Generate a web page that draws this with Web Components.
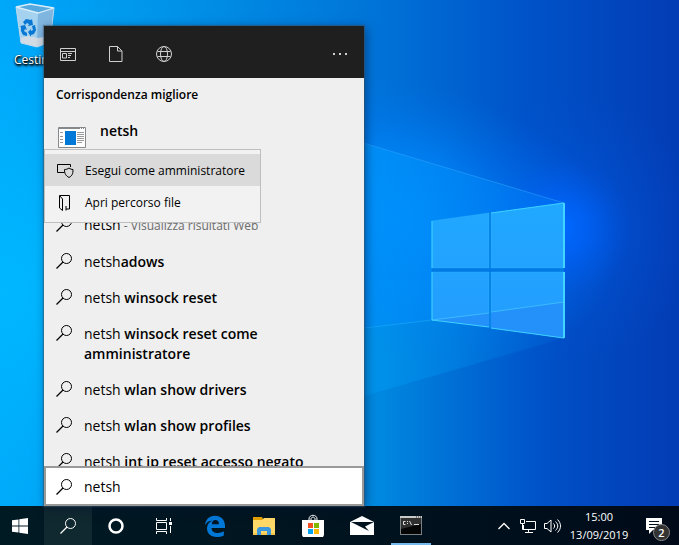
<!DOCTYPE html>
<html lang="it">
<head>
<meta charset="utf-8">
<meta name="viewport" content="width=device-width, initial-scale=1">
<title>netsh</title>
<style>
  html, body {
    height: 100%;
    margin: 0;
  }

  body {
    overflow: hidden;
    font-family: "Open Sans", "Noto Sans", sans-serif;
    font-size: 14px;
    line-height: 20px;
    color: #000;
  }
</style>
</head>
<body>
<win-desktop>
  <desk-wallpaper slot="wallpaper"></desk-wallpaper>
  <desk-shortcut slot="shortcut">Cestino</desk-shortcut>
  <search-panel slot="panel">
    <panel-header slot="header"></panel-header>
    <best-match slot="best" heading="Corrispondenza migliore">netsh</best-match>
    <result-item>netsh<small slot="note"> - Visualizza risultati Web</small></result-item>
    <result-item>netsh<b>adows</b></result-item>
    <result-item>netsh <b>winsock reset</b></result-item>
    <result-item>netsh <b>winsock reset come</b> <b>amministratore</b></result-item>
    <result-item>netsh <b>wlan show drivers</b></result-item>
    <result-item>netsh <b>wlan show profiles</b></result-item>
    <result-item>netsh <b>int ip reset accesso negato</b></result-item>
    <context-menu slot="menu">
      <context-item icon="shield" active>Esegui come amministratore</context-item>
      <context-item icon="location">Apri percorso file</context-item>
    </context-menu>
    <search-box slot="search" value="netsh"></search-box>
  </search-panel>
  <task-bar slot="taskbar">
    <task-button icon="start" label="Start"></task-button>
    <task-button icon="search" label="Cerca" pressed></task-button>
    <task-button icon="cortana" label="Cortana"></task-button>
    <task-button icon="taskview" label="Visualizzazione attività"></task-button>
    <task-button slot="pinned" icon="edge" label="Microsoft Edge"></task-button>
    <task-button slot="pinned" icon="explorer" label="Esplora file"></task-button>
    <task-button slot="pinned" icon="store" label="Microsoft Store"></task-button>
    <task-button slot="pinned" icon="mail" label="Posta"></task-button>
    <task-button slot="pinned" icon="console" label="Prompt dei comandi" running></task-button>
    <system-tray slot="tray" time="15:00" date="13/09/2019" count="2"></system-tray>
  </task-bar>
</win-desktop>

<script>
const svg = (w, h, body) =>
	`<svg width="${w}" height="${h}" viewBox="0 0 ${w} ${h}" fill="none" stroke="currentColor" aria-hidden="true">${body}</svg>`;

const icons = {
	search: svg(16, 16, `<circle cx="10.500" cy="5.500" r="5"/><path d="M7 9 .500 15.500" stroke-width="1.200"/>`),
	apps: svg(16, 14, `<path d="M.5 1.500h15v12H.5zM.5 4.500h15M2.500 6.500h4v4.500h-4zM8 6.500h4M8 8.500h3M8 10.500h2"/>`),
	file: svg(14, 16, `<path d="M.5.5h8l4.500 4.500v10.500H.5zM8.500.5V5H13"/>`),
	web: svg(16, 16, `<circle cx="8" cy="8" r="7.500"/><ellipse cx="8" cy="8" rx="3.500" ry="7.500"/><path d="M1.500 5.500h13M1.500 10.500h13"/>`),
	more: svg(16, 4, `<path d="M1 1h2v2H1zM7 1h2v2H7zM13 1h2v2h-2z" fill="currentColor" stroke="none"/>`),
	app: svg(28, 21, `
		<path d="M.5.500h27v20H.5z" fill="#fff" stroke="#85898c"/>
		<path d="M1 1h26v1H1z" fill="#85898c" stroke="none"/>
		<path d="M22 1.500h1m1 0h1m1 0h1" stroke="#fff"/>
		<path d="M7 4h11v14H7z" fill="#0078d7" stroke="none"/>
		<path d="M2 5.500h3M2 9.500h3M2 12.500h3M2 15.500h3M19 5.500h7M19 7.500h7M19 9.500h7M19 11.500h7M19 13.500h7M19 15.500h5" stroke="#999"/>`),
	shield: svg(17, 16, `<path d="M7.500 9.500H.5v-8h13v2.500"/><path d="M12 5c1.500 1 2.500 1.500 4 1.500 0 4-.5 6-4 8-3.500-2-4.500-4-4.500-8 2 0 3-.5 4.500-1.500z"/>`),
	location: svg(17, 16, `<path d="M3 .5h9.500v13.500H9M2.500.5v12.500l3 2.500V4zM9 11v4.500"/>`),
	start: svg(16, 16, `<path d="M0 2.300 6.500 1.400v6.200H0zM7.300 1.300 16 0v7.600H7.300zM0 8.400h6.500v6.200L0 13.700zM7.300 8.400H16V16l-8.700-1.300z" fill="currentColor" stroke="none"/>`),
	cortana: svg(16, 16, `<circle cx="8" cy="8" r="6.500" stroke-width="2.500"/>`),
	taskview: svg(16, 16, `<path d="M.5 0v2.500h10V0M.5 4.500h10v7H.5zM.5 16v-2.500h10V16M14.500 0v3M14.500 8v7"/><path d="M13 4h3v3h-3z" fill="currentColor" stroke="none"/>`),
	edge: svg(20, 22, `<path d="M0 10C.7 4.500 4.200.7 10 .7c6 0 10 4.200 10 10.100v2.100H6.500c0 3 2.500 5.100 6.200 5.100 2.300 0 4.300-.6 6.100-1.700v4.200c-2.200 1.100-4.400 1.500-7.200 1.500C5.700 22 2 18.300 2 13.500 2 10 3.800 7 7.300 5.500 4 5.700 1.700 7.300 0 10zm6.700-.8H14c-.1-2.700-1.300-4.200-3.700-4.200-1.900 0-3.200 1.500-3.600 4.200z" fill="#0078d7" stroke="none"/>`),
	explorer: svg(22, 18, `
		<g stroke="none"><path d="M0 0h9l1 2h11v3H0z" fill="#e2a000"/>
		<path d="M0 3h9l2-2h11v17H0z" fill="#ffd868"/>
		<path d="M0 16h22v2H0z" fill="#f7c64d"/>
		<path d="M4 18v-6l2-2h10l2 2v6h-4v-4H8v4z" fill="#3a96dd"/></g>`),
	store: svg(24, 24, `
		<path d="M8 7V5c0-5 8-5 8 0v2M10 7V5c0-2.500 4-2.500 4 0v2"/>
		<path d="M1 6h22v15l-1 2H2l-1-2z" fill="#fff" stroke="none"/>
		<g stroke="none"><path d="M7 9h5v5H7z" fill="#f25022"/><path d="M13 9h5v5h-5z" fill="#7fba00"/><path d="M7 15h5v5H7z" fill="#00a4ef"/><path d="M13 15h5v5h-5z" fill="#ffb900"/></g>`),
	mail: svg(24, 20, `<path d="M0 6 12 0l12 6v13H0z" fill="#fff" stroke="none"/><path d="M1 6h23l-9 4.500L19 15z" fill="#00131f" stroke="none"/>`),
	console: svg(22, 19, `
		<g stroke="none"><path d="M0 0h22v19H0z" fill="#7c8284"/><path d="M0 0h22v2H0z" fill="#c8c8c8"/><path d="M1 2h20v16H1z" fill="#050505"/><path d="M1 2h20v6L1 13z" fill="#303030"/></g>
		<path d="M16 1h1m1 0h1m1 0h1" stroke="#333"/>
		<path d="M5.500 5.500H3.500v3h2M7.500 5v1m0 1v1M9.500 5l2 4M14 8.500h5" stroke="#ddd"/>`),
	chevron: svg(14, 8, `<path d="m1.500 7 5.500-5.500L12.500 7" stroke-width="1.300"/>`),
	network: svg(16, 14, `<path d="M6 2.500h9.500v8h-12V6M8.500 11v2M5 13.500h8M.5.500h4v4H.5zM2.500 5v5.500h2"/>`),
	volume: svg(17, 14, `<path d="M.5 4.500H3l4-3.500v12l-4-3.500H.5zM9.500 4.500c1.500 1.500 1.500 3.500 0 5M11.500 2.500c3 3 3 6 0 9M13.500.5c4 4 4 9 0 13"/>`),
	notice: svg(18, 18, `<path d="M1 1h16v12H8l-4 4v-4H1z" fill="#fff" stroke="none"/><path d="M4 4.500h10M4 7.500h10M4 10.500h6" stroke="#00101d"/>`),
};

class WinDesktop extends HTMLElement {
	constructor() {
		super();
		this.attachShadow({ mode: "open" });
		this.shadowRoot.innerHTML = `
      <style>
        :host {
          display: flex;
          flex-direction: column;
          height: 100vh;
        }

        main {
          position: relative;
          flex: 1;
          min-height: 0;
        }
      </style>
      <main>
        <slot name="wallpaper"></slot>
        <slot name="shortcut"></slot>
        <slot name="panel"></slot>
      </main>
      <slot name="taskbar"></slot>
    `;
	}
}

class DeskWallpaper extends HTMLElement {
	constructor() {
		super();
		this.attachShadow({ mode: "open" });
		this.shadowRoot.innerHTML = `
      <style>
        :host {
          position: absolute;
          inset: 0;
        }

        svg {
          display: block;
          width: 100%;
          height: 100%;
        }
      </style>
      <svg viewBox="0 0 679 506" preserveAspectRatio="xMaxYMid slice" aria-hidden="true">
        <defs>
          <linearGradient id="sky" x2="1" y2="0">
            <stop offset="0" stop-color="#00a6f8"/>
            <stop offset=".3" stop-color="#008ee6"/>
            <stop offset=".55" stop-color="#0074d8"/>
            <stop offset=".78" stop-color="#0052c8"/>
            <stop offset="1" stop-color="#033cb4"/>
          </linearGradient>
          <radialGradient id="left" gradientUnits="userSpaceOnUse" cx="0" cy="290" r="340">
            <stop offset="0" stop-color="#00b8ff"/>
            <stop offset="1" stop-color="#00b0ff" stop-opacity="0"/>
          </radialGradient>
          <radialGradient id="halo" gradientUnits="userSpaceOnUse" cx="0" cy="0" r="1" gradientTransform="translate(400 220) rotate(14) scale(220 140)">
            <stop offset="0" stop-color="#008cff"/>
            <stop offset=".5" stop-color="#0084f8" stop-opacity=".7"/>
            <stop offset="1" stop-color="#0070e8" stop-opacity="0"/>
          </radialGradient>
          <radialGradient id="glow" gradientUnits="userSpaceOnUse" cx="562" cy="228" r="140">
            <stop offset="0" stop-color="#0068ff"/>
            <stop offset=".2" stop-color="#0062fa" stop-opacity=".75"/>
            <stop offset=".5" stop-color="#005ae8" stop-opacity=".25"/>
            <stop offset="1" stop-color="#0054d8" stop-opacity="0"/>
          </radialGradient>
          <linearGradient id="beam" gradientUnits="userSpaceOnUse" x1="340" y1="0" x2="564" y2="0">
            <stop offset="0" stop-color="#0096fa" stop-opacity=".8"/>
            <stop offset=".5" stop-color="#008cf8" stop-opacity=".6"/>
            <stop offset="1" stop-color="#007cf8" stop-opacity=".4"/>
          </linearGradient>
          <linearGradient id="low" gradientUnits="userSpaceOnUse" x1="340" y1="0" x2="564" y2="0">
            <stop offset="0" stop-color="#009cf2" stop-opacity=".8"/>
            <stop offset=".5" stop-color="#0086e6" stop-opacity=".6"/>
            <stop offset="1" stop-color="#0062d4" stop-opacity=".3"/>
          </linearGradient>
          <linearGradient id="floor" gradientUnits="userSpaceOnUse" x1="340" y1="0" x2="560" y2="0">
            <stop offset="0" stop-color="#0098e6" stop-opacity=".9"/>
            <stop offset="1" stop-color="#0068d4" stop-opacity="0"/>
          </linearGradient>
          <linearGradient id="pane" x2="0" y2="1">
            <stop offset="0" stop-color="#20a8ff"/>
            <stop offset="1" stop-color="#249cff"/>
          </linearGradient>
        </defs>
        <path d="M0 0h679v506H0z" fill="url(#sky)"/>
        <path d="M0 0h340v506H0z" fill="url(#left)"/>
        <path d="M340 280h224v226H340z" fill="url(#floor)"/>
        <path d="M150 50h500v340H150z" fill="url(#halo)"/>
        <path d="M400 60h279v350H400z" fill="url(#glow)"/>
        <path d="M340 136 564 203v98L432 320l-92 12z" fill="url(#beam)"/>
        <path d="m340 332 92-12 132-19v37L364 396l-24 7z" fill="url(#low)"/>
        <path d="M340 136 564 203" stroke="#32a8ff" stroke-opacity=".5"/>
        <path d="m340 331 92-11" stroke="#2cbcff" stroke-opacity=".4"/>
        <path d="m432 221 132-18v135l-132-18z" fill="#0078e6"/>
        <path d="m432 221 57-8v55h-57zM491 213l73-10v65h-73zM432 272h57v55l-57-7zM491 272h73v66l-73-10z" fill="url(#pane)" stroke="#38c8ff" stroke-opacity=".3"/>
        <path d="m432 320 57-7v14zM491 312l73-10v36l-73-10z" fill="#2490fa"/>
        <path d="m432 320 57-7m2-1 73-10" stroke="#3cbcff"/>
        <path d="M432 221v47m0 4v48l57 7m2 1 73 10M491 213l73-10" stroke="#3cd0ff" fill="none"/>
        <path d="M564 203v65m0 4v66" stroke="#40d4ff" stroke-width="2"/>
      </svg>
    `;
	}
}

class DeskShortcut extends HTMLElement {
	constructor() {
		super();
		this.attachShadow({ mode: "open" });
		this.shadowRoot.innerHTML = `
      <style>
        :host {
          position: absolute;
          top: 3px;
          left: 0;
          width: 70px;
        }

        a {
          display: flex;
          flex-direction: column;
          align-items: center;
          gap: 3px;
          color: #fff;
          font-size: 12px;
          line-height: 16px;
          text-decoration: none;
          text-shadow: 0 1px 2px #000, 1px 1px 2px #000, 1px 2px 3px #000;
        }
      </style>
      <a href="#">
        <svg width="40" height="46" viewBox="0 0 40 46" aria-hidden="true">
          <path d="m1 4 14-3 24 4-4 34-13 5L6 40z" fill="#9fcdf0" fill-opacity=".75"/>
          <path d="m1 4 22 6-1 34L6 40z" fill="#b9d8ee" fill-opacity=".7"/>
          <path d="m23 10 16-5-4 34-13 5z" fill="#82b4dc" fill-opacity=".8"/>
          <path d="m5 35 9-2 9 2 12-2v6l-13 5-16-4z" fill="#d8dde2" fill-opacity=".9"/>
          <path d="m1 4 14-3 24 4-16 5z" fill="#55a9df" stroke="#d8edf9" stroke-width="1.300"/>
          <path d="m1 4 5 36 16 4 13-5 4-34" fill="none" stroke="#b9d8ee"/>
          <g fill="#0878d4">
            <path d="m8 19 3-3 5 1 1-1 1 6-5 1 1-2-2-1-2 2z"/>
            <path d="m17 23 3-1 1 5-2 4-3 1v2l-3-5 3-3v2l2-1z"/>
            <path d="m5 23 5-1 2 5-2-1-1 2 3 2v3l-4-1-2-4v-4z"/>
          </g>
        </svg>
        <slot></slot>
      </a>
    `;
	}
}

class SearchPanel extends HTMLElement {
	constructor() {
		super();
		this.attachShadow({ mode: "open" });
		this.shadowRoot.innerHTML = `
      <style>
        :host {
          position: absolute;
          top: 26px;
          bottom: 0;
          left: 44px;
          display: flex;
          flex-direction: column;
          width: 320px;
          max-width: calc(100vw - 44px);
          background: #efefef;
          box-shadow: 0 0 1px 1px rgba(60, 80, 95, 0.5), 2px 2px 10px rgba(0, 20, 60, 0.5);
        }

        .body {
          flex: 1;
          min-height: 0;
          overflow: hidden;
        }

        .results {
          padding-top: 52px;
        }
      </style>
      <slot name="header"></slot>
      <div class="body">
        <slot name="best"></slot>
        <div class="results"><slot></slot></div>
      </div>
      <slot name="search"></slot>
      <slot name="menu"></slot>
    `;
	}
}

class PanelHeader extends HTMLElement {
	constructor() {
		super();
		this.attachShadow({ mode: "open" });
		this.shadowRoot.innerHTML = `
      <style>
        :host {
          display: flex;
          flex: none;
          align-items: center;
          height: 52px;
          background: #1f1f1f;
          color: #d0d0d0;
        }

        button {
          display: flex;
          align-items: center;
          justify-content: center;
          width: 48px;
          height: 48px;
          margin-top: 4px;
          padding: 0;
          border: 0;
          background: none;
          color: inherit;
        }

        .more {
          margin-left: auto;
        }
      </style>
      <button aria-label="App">${icons.apps}</button>
      <button aria-label="Documenti">${icons.file}</button>
      <button aria-label="Web">${icons.web}</button>
      <button class="more" aria-label="Altro">${icons.more}</button>
    `;
	}
}

class BestMatch extends HTMLElement {
	constructor() {
		super();
		this.attachShadow({ mode: "open" });
		this.shadowRoot.innerHTML = `
      <style>
        :host {
          display: block;
        }

        h2 {
          margin: 0;
          padding: 7px 12px 5px;
          font-size: 12px;
          font-weight: 600;
          line-height: 20px;
        }

        button {
          display: flex;
          gap: 14px;
          width: 100%;
          height: 45px;
          padding: 11px 14px 0;
          border: 0;
          background: none;
          color: inherit;
          font: inherit;
          font-weight: 600;
        }

        svg {
          margin-top: 6px;
        }
      </style>
      <h2></h2>
      <button>${icons.app}<span><slot></slot></span></button>
    `;
		this.shadowRoot.querySelector("h2").textContent = this.getAttribute("heading");
	}
}

class ResultItem extends HTMLElement {
	constructor() {
		super();
		this.attachShadow({ mode: "open" });
		this.shadowRoot.innerHTML = `
      <style>
        :host {
          display: block;
        }

        button {
          display: flex;
          gap: 12px;
          width: 100%;
          padding: 8px 40px 8px 12px;
          border: 0;
          background: none;
          color: inherit;
          font: inherit;
          text-align: left;
        }

        svg {
          flex: none;
          margin-top: 1px;
        }

        ::slotted(b) {
          font-weight: 600;
        }

        ::slotted(small) {
          color: #6b6b6b;
          font-size: 12px;
        }
      </style>
      <button>${icons.search}<span><slot></slot><slot name="note"></slot></span></button>
    `;
	}
}

class ContextMenu extends HTMLElement {
	constructor() {
		super();
		this.attachShadow({ mode: "open" });
		this.shadowRoot.innerHTML = `
      <style>
        :host {
          position: absolute;
          top: 123px;
          left: 0;
          box-sizing: border-box;
          width: 217px;
          padding: 4px 0;
          border: 1px solid #bfbfbf;
          background: #f2f2f2;
        }
      </style>
      <div role="menu"><slot></slot></div>
    `;
	}
}

class ContextItem extends HTMLElement {
	constructor() {
		super();
		this.attachShadow({ mode: "open" });
		this.shadowRoot.innerHTML = `
      <style>
        :host {
          display: block;
        }

        :host([active]) {
          background: #dadada;
        }

        button {
          display: flex;
          align-items: center;
          gap: 11px;
          width: 100%;
          height: 32px;
          padding: 2px 12px 0;
          border: 0;
          background: none;
          color: inherit;
          font: inherit;
          font-size: 12px;
          white-space: nowrap;
        }
      </style>
      <button role="menuitem">${icons[this.getAttribute("icon")]}<span><slot></slot></span></button>
    `;
	}
}

class SearchBox extends HTMLElement {
	constructor() {
		super();
		this.attachShadow({ mode: "open" });
		this.shadowRoot.innerHTML = `
      <style>
        :host {
          display: flex;
          flex: none;
          align-items: center;
          gap: 12px;
          box-sizing: border-box;
          height: 40px;
          padding: 2px 10px 0;
          border: 2px solid #999;
          background: #fff;
        }

        label {
          display: flex;
        }

        input {
          flex: 1;
          min-width: 0;
          padding: 0;
          border: 0;
          outline: 0;
          background: none;
          color: inherit;
          font: inherit;
        }
      </style>
      <label for="query">${icons.search}</label>
      <input id="query" type="text" aria-label="Cerca">
    `;
		this.shadowRoot.querySelector("input").value = this.getAttribute("value");
	}
}

class TaskBar extends HTMLElement {
	constructor() {
		super();
		this.attachShadow({ mode: "open" });
		this.shadowRoot.innerHTML = `
      <style>
        :host {
          display: flex;
          flex: none;
          gap: 3px;
          height: 39px;
          background: linear-gradient(90deg, #001a24, #00121e 60%, #000a18);
          color: #fff;
        }

        div {
          display: flex;
        }

        .system {
          margin-left: -4px;
        }

        .pinned {
          gap: 1px;
        }

        .tray {
          margin-left: auto;
        }
      </style>
      <div class="system"><slot></slot></div>
      <div class="pinned"><slot name="pinned"></slot></div>
      <div class="tray"><slot name="tray"></slot></div>
    `;
	}
}

class TaskButton extends HTMLElement {
	constructor() {
		super();
		this.attachShadow({ mode: "open" });
		this.shadowRoot.innerHTML = `
      <style>
        :host {
          display: block;
          width: 48px;
        }

        :host([pressed]) {
          background: #10282f;
        }

        :host([running]) {
          background: linear-gradient(#76b9ed, #76b9ed) center bottom / 40px 2px no-repeat;
        }

        button {
          display: flex;
          align-items: center;
          justify-content: center;
          width: 100%;
          height: 100%;
          padding: 0;
          border: 0;
          background: none;
          color: inherit;
        }
      </style>
      <button aria-label="${this.getAttribute("label")}">${icons[this.getAttribute("icon")]}</button>
    `;
	}
}

class SystemTray extends HTMLElement {
	constructor() {
		super();
		this.attachShadow({ mode: "open" });
		this.shadowRoot.innerHTML = `
      <style>
        :host {
          display: flex;
          padding-right: 1px;
        }

        button {
          position: relative;
          display: flex;
          align-items: center;
          justify-content: center;
          width: 24px;
          padding: 0;
          border: 0;
          background: none;
          color: inherit;
          font: inherit;
        }

        .clock {
          flex-direction: column;
          width: 66px;
          padding-left: 4px;
          font-size: 11px;
          line-height: 18px;
        }

        .notice {
          width: 48px;
        }

        .badge {
          position: absolute;
          right: 8px;
          bottom: 4px;
          box-sizing: border-box;
          width: 17px;
          height: 17px;
          border: 1px solid #888;
          border-radius: 50%;
          background: #333;
          font-size: 11px;
          font-weight: 600;
          line-height: 15px;
        }
      </style>
      <button aria-label="Mostra icone nascoste">${icons.chevron}</button>
      <button aria-label="Rete">${icons.network}</button>
      <button aria-label="Volume">${icons.volume}</button>
      <button class="clock">
        <span>${this.getAttribute("time")}</span>
        <span>${this.getAttribute("date")}</span>
      </button>
      <button class="notice" aria-label="Notifiche">${icons.notice}<span class="badge">${this.getAttribute("count")}</span></button>
    `;
	}
}

customElements.define("win-desktop", WinDesktop);
customElements.define("desk-wallpaper", DeskWallpaper);
customElements.define("desk-shortcut", DeskShortcut);
customElements.define("search-panel", SearchPanel);
customElements.define("panel-header", PanelHeader);
customElements.define("best-match", BestMatch);
customElements.define("result-item", ResultItem);
customElements.define("context-menu", ContextMenu);
customElements.define("context-item", ContextItem);
customElements.define("search-box", SearchBox);
customElements.define("task-bar", TaskBar);
customElements.define("task-button", TaskButton);
customElements.define("system-tray", SystemTray);
</script>
</body>
</html>
